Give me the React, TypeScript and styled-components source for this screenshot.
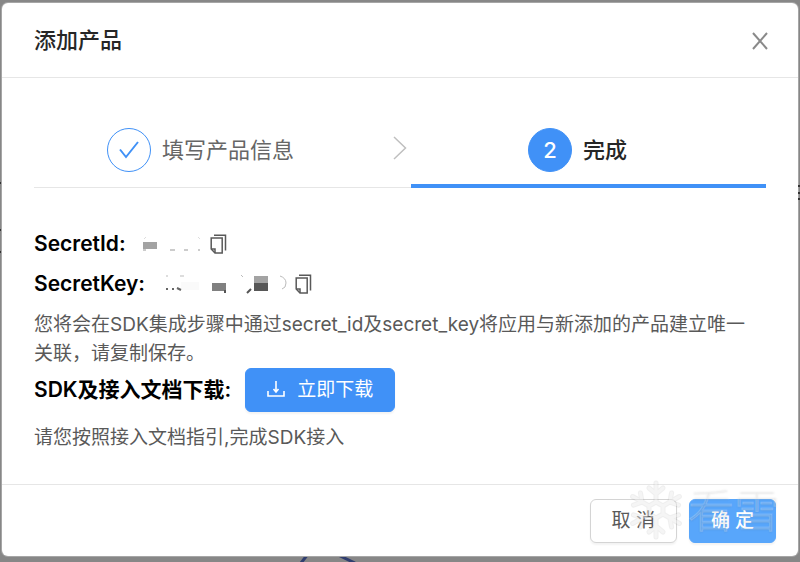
import React from "react";
import styled, { createGlobalStyle, css } from "styled-components";

const GlobalStyle = createGlobalStyle`
  * { box-sizing: border-box; }
  body {
    margin: 0;
    background: #878787;
    font-family: Inter, "Noto Sans CJK SC", sans-serif;
    color: #595959;
  }
  h1, p, dl, dd, dt, ol { margin: 0; padding: 0; }
  button { font-family: inherit; cursor: pointer; }
`;

const Backdrop = styled.div`
  position: relative;
  min-height: 100vh;
  padding: 3px 2px 5px;
  overflow: hidden;
`;

const PageTrace = styled.svg`
  position: absolute;
  left: 296px;
  bottom: 0;
`;

const EdgeTrace = styled.svg<{ $side: "left" | "right" }>`
  position: absolute;
  top: 180px;
  ${(p) => (p.$side === "left" ? "left: 0;" : "right: 0;")}
`;

const Dialog = styled.section`
  position: relative;
  background: #fff;
  border-radius: 6px;
  box-shadow: 0 0 0 1px #a6a6a6;
`;

const Header = styled.header`
  display: flex;
  align-items: center;
  justify-content: space-between;
  height: 75px;
  padding: 0 28px 0 32px;
  border-bottom: 1px solid #e6e6e6;
`;

const Title = styled.h1`
  font-size: 22px;
  line-height: 32px;
  font-weight: 500;
  color: #262626;
`;

const IconButton = styled.button`
  display: inline-flex;
  padding: 0;
  border: 0;
  background: none;
  color: #595959;
`;

const CloseButton = styled(IconButton)`
  color: #8a8a8a;
`;

const Body = styled.div`
  padding: 50px 32px 32px;
`;

const Steps = styled.ol`
  display: grid;
  grid-template-columns: 377fr 355fr;
  list-style: none;
`;

const Step = styled.li<{ $active?: boolean }>`
  display: flex;
  height: 60px;
  border-bottom: 1px solid #e6e6e6;
  ${(p) =>
    p.$active &&
    css`
      border-bottom: 4px solid #4091f7;
      padding-right: 22px;
    `}
`;

const StepContent = styled.div<{ $active?: boolean }>`
  flex: 1;
  display: flex;
  justify-content: center;
  gap: 11px;
  font-size: 22px;
  line-height: 44px;
  font-weight: ${(p) => (p.$active ? 500 : 400)};
  color: ${(p) => (p.$active ? "#262626" : "#666")};
`;

const StepCircle = styled.span<{ $active?: boolean }>`
  display: flex;
  align-items: center;
  justify-content: center;
  width: 44px;
  height: 44px;
  border: 1px solid #4091f7;
  border-radius: 50%;
  color: ${(p) => (p.$active ? "#fff" : "#4091f7")};
  background: ${(p) => (p.$active ? "#4091f7" : "#fff")};
`;

const StepArrow = styled.span`
  display: flex;
  justify-content: flex-end;
  width: 44px;
  height: 40px;
  padding-right: 4px;
  align-items: center;
`;

const Details = styled.dl`
  margin: 36px 0 6px;
`;

const Row = styled.div`
  display: flex;
  align-items: center;
  height: 40px;
`;

const Term = styled.dt`
  font-size: 21px;
  line-height: 40px;
  font-weight: 600;
  color: #000;
`;

const Value = styled.dd`
  display: flex;
  align-items: center;
  gap: 8px;
  margin-left: 16px;
`;

const Text = styled.p`
  padding-right: 12px;
  font-size: 19px;
  line-height: 29px;
`;

const DownloadRow = styled.div`
  display: flex;
  align-items: center;
  gap: 14px;
  margin-bottom: 11px;
`;

const DownloadLabel = styled.span`
  font-size: 21px;
  line-height: 40px;
  font-weight: 600;
  color: #000;
`;

const Button = styled.button<{ $primary?: boolean }>`
  display: inline-flex;
  align-items: center;
  justify-content: center;
  gap: 12px;
  height: 44px;
  padding: 0 21px;
  border: 1px solid ${(p) => (p.$primary ? "#4091f7" : "#d4d4d4")};
  border-radius: 6px;
  font-size: 19px;
  line-height: 28px;
  white-space: pre;
  color: ${(p) => (p.$primary ? "#fff" : "#595959")};
  background: ${(p) => (p.$primary ? "#4091f7" : "#fff")};
  box-shadow: 0 2px 2px rgba(0, 0, 0, 0.05);
`;

const Footer = styled.footer`
  display: flex;
  justify-content: flex-end;
  gap: 12px;
  padding: 14px 22px 13px;
  border-top: 1px solid #e6e6e6;
`;

const ConfirmButton = styled(Button)`
  font-weight: 500;
  border-color: #58a6fb;
  background: #58a6fb;
`;

const Watermark = styled.div`
  position: absolute;
  right: 18px;
  bottom: 16px;
  display: flex;
  align-items: center;
  gap: 4px;
  pointer-events: none;
  font-size: 46px;
  line-height: 60px;
  font-weight: 300;
  color: rgba(255, 255, 255, 0.1);
  text-shadow: 0 1px 2px rgba(90, 90, 90, 0.14);
  -webkit-text-stroke: 1px rgba(255, 255, 255, 0.2);
`;

const CopyIcon = () => (
  <svg width="17" height="20" viewBox="0 0 17 20" fill="none" stroke="currentColor" strokeWidth="1.5">
    <path d="M4 1.2h11.5v15.3" />
    <path d="M1.2 4h11v15H5l-3.8-4z" />
    <path d="M1.2 15H5v4" />
  </svg>
);

const Snowflake = () => (
  <svg width="56" height="60" viewBox="-28 -30 56 60" fill="none" strokeLinecap="round">
    {[
      { color: "rgb(110,110,110)", opacity: 0.1, width: 5 },
      { color: "rgb(255,255,255)", opacity: 0.4, width: 3 },
    ].map((s) => (
      <g key={s.width} stroke={s.color} strokeWidth={s.width} opacity={s.opacity}>
        <path d="M0-8L7-4V4L0 8L-7 4V-4Z" />
        {[0, 60, 120, 180, 240, 300].map((a) => (
          <path key={a} transform={`rotate(${a})`} d="M0-8V-27M-7-22L0-16L7-22" />
        ))}
      </g>
    ))}
  </svg>
);

export default function App() {
  return (
    <>
      <GlobalStyle />
      <Backdrop>
        <PageTrace width="64" height="8" viewBox="0 0 64 8" fill="none" stroke="#303e6f" strokeWidth="3" aria-hidden>
          <path d="M5 9L12 0M40 0L59 9" />
        </PageTrace>
        <EdgeTrace $side="left" width="2" height="80" aria-hidden>
          <path d="M0 3h2M0 50h2M0 72h2" stroke="#333" strokeWidth="2" />
        </EdgeTrace>
        <Dialog role="dialog" aria-labelledby="dialog-title">
          <Header>
            <Title id="dialog-title">添加产品</Title>
            <CloseButton aria-label="关闭">
              <svg width="20" height="20" viewBox="0 0 20 20" fill="none" stroke="currentColor" strokeWidth="2">
                <path d="M3 3L17 19M17 3L3 19" />
              </svg>
            </CloseButton>
          </Header>
          <Body>
            <Steps>
              <Step>
                <StepContent>
                  <StepCircle>
                    <svg width="20" height="18" viewBox="0 0 20 18" fill="none" stroke="currentColor" strokeWidth="2">
                      <path d="M1 8.5L7 16L19 1" />
                    </svg>
                  </StepCircle>
                  填写产品信息
                </StepContent>
                <StepArrow>
                  <svg width="14" height="24" viewBox="0 0 14 24" fill="none" stroke="#bfbfbf" strokeWidth="1.5">
                    <path d="M1 1L12.5 12L1 23" />
                  </svg>
                </StepArrow>
              </Step>
              <Step $active aria-current="step">
                <StepContent $active>
                  <StepCircle $active>2</StepCircle>
                  完成
                </StepContent>
              </Step>
            </Steps>
            <Details>
              <Row>
                <Term>SecretId:</Term>
                <Value>
                  <svg width="60" height="16" viewBox="0 0 60 16" aria-hidden>
                    <path d="M1 6h14v7H1z" fill="#a3a3a3" />
                    <path d="M2 3l2-2M56 1l2 2" stroke="#ddd" />
                    <path d="M1 14h3M28 14h5M42 14h4M56 14h2" stroke="#999" />
                  </svg>
                  <IconButton aria-label="复制 SecretId"><CopyIcon /></IconButton>
                </Value>
              </Row>
              <Row>
                <Term>SecretKey:</Term>
                <Value>
                  <svg width="126" height="20" viewBox="0 0 126 20" aria-hidden>
                    <path d="M20 8h18v8H20z" fill="#fafafa" />
                    <path d="M5 15h2M11 15h2M16 14l4 2" stroke="#666" strokeWidth="2" />
                    <path d="M5 2h2M19 2h4M80 1l2 2" stroke="#bbb" />
                    <path d="M51 9h14v8H51z" fill="#808080" />
                    <path d="M64 16v3M90 15l-4 4" stroke="#555" strokeWidth="2" />
                    <path d="M93 2h14v7H93z" fill="#a3a3a3" />
                    <path d="M93 9h14v8H93z" fill="#575757" />
                    <path d="M119 2q6 2 6 7t-4 6" fill="none" stroke="#bbb" />
                  </svg>
                  <IconButton aria-label="复制 SecretKey"><CopyIcon /></IconButton>
                </Value>
              </Row>
            </Details>
            <Text>
              您将会在SDK集成步骤中通过secret_id及secret_key将应用与新添加的产品建立唯一关联，请复制保存。
            </Text>
            <DownloadRow>
              <DownloadLabel>SDK及接入文档下载:</DownloadLabel>
              <Button $primary>
                <svg width="18" height="18" viewBox="0 0 18 18" fill="none" stroke="currentColor" strokeWidth="1.6">
                  <path d="M1 10v5h16v-5M9 0v10M6.5 8L9 11L11.5 8" />
                </svg>
                立即下载
              </Button>
            </DownloadRow>
            <Text>请您按照接入文档指引,完成SDK接入</Text>
          </Body>
          <Footer>
            <Button>取 消</Button>
            <ConfirmButton $primary>确 定</ConfirmButton>
          </Footer>
          <Watermark aria-hidden>
            <Snowflake />
            <span>看雪</span>
          </Watermark>
        </Dialog>
        <EdgeTrace $side="right" width="2" height="80" aria-hidden>
          <path d="M0 6h2M0 13h2M0 19h2" stroke="#333" strokeWidth="2" />
        </EdgeTrace>
      </Backdrop>
    </>
  );
}
